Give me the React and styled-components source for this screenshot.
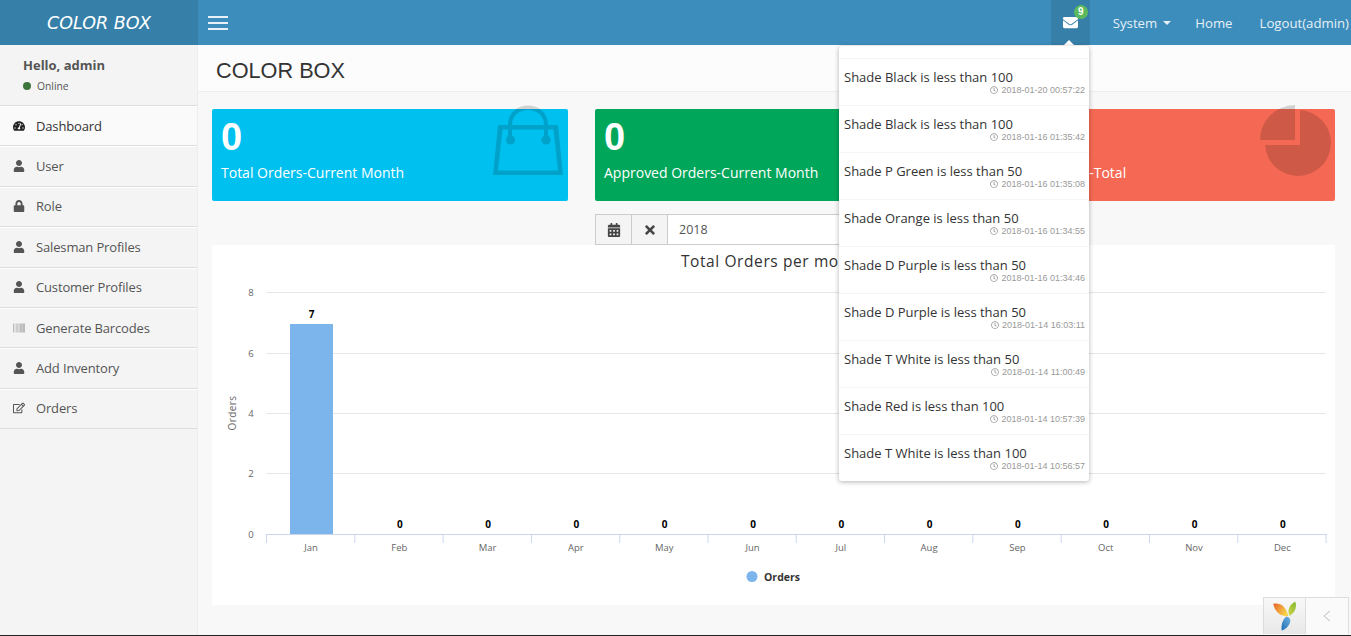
import React from "react";
import styled, { createGlobalStyle } from "styled-components";
import { FaTachometerAlt, FaUser, FaLock, FaBarcode, FaRegEdit, FaCalendarAlt, FaTimes, FaEnvelope, FaRegClock } from "react-icons/fa";

const GlobalStyle = createGlobalStyle`
  html, body { margin: 0; padding: 0; height: 100%; }
  body { font-family: "Open Sans", sans-serif; background: #f8f8f8; }
  * { box-sizing: border-box; }
`;

const menu = [
  { label: "Dashboard", icon: <FaTachometerAlt />, active: true },
  { label: "User", icon: <FaUser /> },
  { label: "Role", icon: <FaLock /> },
  { label: "Salesman Profiles", icon: <FaUser /> },
  { label: "Customer Profiles", icon: <FaUser /> },
  { label: "Generate Barcodes", icon: <FaBarcode />, muted: true },
  { label: "Add Inventory", icon: <FaUser /> },
  { label: "Orders", icon: <FaRegEdit /> },
];

const alerts = [
  ["Shade Black is less than 100", "2018-01-20 00:57:22"],
  ["Shade Black is less than 100", "2018-01-16 01:35:42"],
  ["Shade P Green is less than 50", "2018-01-16 01:35:08"],
  ["Shade Orange is less than 50", "2018-01-16 01:34:55"],
  ["Shade D Purple is less than 50", "2018-01-16 01:34:46"],
  ["Shade D Purple is less than 50", "2018-01-14 16:03:11"],
  ["Shade T White is less than 50", "2018-01-14 11:00:49"],
  ["Shade Red is less than 100", "2018-01-14 10:57:39"],
  ["Shade T White is less than 100", "2018-01-14 10:56:57"],
];

const months = ["Jan", "Feb", "Mar", "Apr", "May", "Jun", "Jul", "Aug", "Sep", "Oct", "Nov", "Dec"];
const orders = [7, 0, 0, 0, 0, 0, 0, 0, 0, 0, 0, 0];

const BagIcon = () => (
  <WatermarkSvg viewBox="0 0 70 72" width="70" height="72">
    <path
      fillRule="evenodd"
      d="M5 20 H65 L70 70 H0 Z M9.5 24.5 L5 65.5 H65 L60.5 24.5 Z"
    />
    <path d="M15 20 C15 -6 55 -6 55 20 V32 H51 V20 C51 0 19 0 19 20 V32 H15 Z" />
    <circle cx="17.5" cy="35" r="4.6" />
    <circle cx="53" cy="35" r="4.6" />
  </WatermarkSvg>
);

const PieIcon = () => (
  <WatermarkSvg viewBox="0 0 72 72" width="72" height="72">
    <path d="M35 0 V35 H0 A35 35 0 0 1 35 0 Z" />
    <path d="M40 5 A33 33 0 1 1 5 40 H40 Z" />
  </WatermarkSvg>
);

const YiiLogo = () => (
  <svg width="25" height="30" viewBox="0 0 26 32">
    <defs>
      <linearGradient id="yiiOrange" x1="0" y1="0" x2="1" y2="0.6">
        <stop offset="0" stopColor="#e8612a" />
        <stop offset="1" stopColor="#f7d64a" />
      </linearGradient>
      <linearGradient id="yiiGreen" x1="0" y1="1" x2="1" y2="0">
        <stop offset="0" stopColor="#d6d84a" />
        <stop offset="1" stopColor="#7cb52f" />
      </linearGradient>
      <linearGradient id="yiiBlue" x1="1" y1="0" x2="0" y2="1">
        <stop offset="0" stopColor="#6fb1e0" />
        <stop offset="1" stopColor="#1f6fb5" />
      </linearGradient>
    </defs>
    <path d="M1 3 C8 1 15 6 17 16 C10 17 3 13 1 3 Z" fill="url(#yiiOrange)" />
    <path d="M24.5 0.5 C26.5 7 24 12.5 18.5 16 C15.5 10 18 4 24.5 0.5 Z" fill="url(#yiiGreen)" />
    <path d="M15 16.5 C19 17.5 20 20 18.5 24 C17 28 12.5 31 10 31.5 C9 26 11 20 15 16.5 Z" fill="url(#yiiBlue)" />
  </svg>
);

const Chart = () => {
  const left = 266;
  const step = 88.3;
  const base = 534;
  const unit = 30;
  const ox = 212;
  const oy = 245;
  return (
    <svg width="1123" height="360" viewBox={`${ox} ${oy} 1123 360`}>
      <rect x={ox} y={oy} width="1123" height="360" fill="#fff" />
      <ChartTitle x="773" y="267">Total Orders per month</ChartTitle>
      {[0, 2, 4, 6, 8].map((v) => {
        const y = [534, 473, 413, 353, 292][v / 2];
        return (
          <g key={v}>
            {v > 0 && <line x1={left} x2="1326" y1={y + 0.5} y2={y + 0.5} stroke="#e6e6e6" />}
            <AxisText x="251" y={y + 3.5} textAnchor="middle">{v}</AxisText>
          </g>
        );
      })}
      <AxisTitle transform="translate(236 413) rotate(-90)" textAnchor="middle">Orders</AxisTitle>
      <line x1={left} x2="1327" y1={base + 0.5} y2={base + 0.5} stroke="#ccd6eb" />
      {[...months, ""].map((m, i) => (
        <line key={i} x1={left + step * i + 0.5} x2={left + step * i + 0.5} y1={base} y2={base + 9} stroke="#ccd6eb" />
      ))}
      {months.map((m, i) => {
        const cx = left + step * i + 44.5;
        const h = orders[i] * unit;
        return (
          <g key={m}>
            {h > 0 && <rect x={cx - 20.5} y={base - h} width="43" height={h} fill="#7cb5ec" />}
            <ValueText x={cx + 1} y={base - h - 6}>{orders[i]}</ValueText>
            <AxisText x={cx + 0.5} y={base + 17} textAnchor="middle">{m}</AxisText>
          </g>
        );
      })}
      <circle cx="752" cy="576.5" r="5.5" fill="#7cb5ec" />
      <LegendText x="764" y="581">Orders</LegendText>
    </svg>
  );
};

const App = () => {
  return (
    <Page>
      <GlobalStyle />
      <Header>
        <Logo>COLOR BOX</Logo>
        <TopBar>
          <Burger>
            <span />
            <span />
            <span />
          </Burger>
          <TopNav>
            <MailTab>
              <FaEnvelope />
              <Badge>9</Badge>
              <Caret />
            </MailTab>
            <TopLink $gap={24}>System <SmallCaret /></TopLink>
            <TopLink $gap={27}>Home</TopLink>
            <TopLink $gap={0}>Logout(admin)</TopLink>
          </TopNav>
        </TopBar>
        <Dropdown>
          <EmptyRow />
          {alerts.map(([text, time], i) => (
            <AlertRow key={i}>
              <AlertText>{text}</AlertText>
              <AlertTime><FaRegClock /> {time}</AlertTime>
            </AlertRow>
          ))}
        </Dropdown>
      </Header>
      <Body>
        <Sidebar>
          <UserPanel>
            <UserName>Hello, admin</UserName>
            <UserStatus><Dot />Online</UserStatus>
          </UserPanel>
          <Menu>
            {menu.map((item) => (
              <MenuItem key={item.label} $active={item.active}>
                <MenuIcon $active={item.active} $muted={item.muted}>{item.icon}</MenuIcon>
                {item.label}
              </MenuItem>
            ))}
          </Menu>
        </Sidebar>
        <Main>
          <PageHead>COLOR BOX</PageHead>
          <Content>
            <Cards>
              <Card $bg="#00c0ef">
                <CardNumber>0</CardNumber>
                <CardLabel>Total Orders-Current Month</CardLabel>
                <BagSlot><BagIcon /></BagSlot>
              </Card>
              <Card $bg="#00a65a">
                <CardNumber>0</CardNumber>
                <CardLabel>Approved Orders-Current Month</CardLabel>
              </Card>
              <Card $bg="#f56954">
                <CardNumber>0</CardNumber>
                <CardLabel>Pending Orders-Total</CardLabel>
                <PieSlot><PieIcon /></PieSlot>
              </Card>
            </Cards>
            <FilterRow>
              <InputGroup>
                <Addon><FaCalendarAlt /></Addon>
                <Addon><FaTimes /></Addon>
                <YearInput>2018</YearInput>
              </InputGroup>
            </FilterRow>
            <ChartBox><Chart /></ChartBox>
          </Content>
        </Main>
      </Body>
      <DebugBar>
        <DebugLogo><YiiLogo /></DebugLogo>
        <DebugToggle>
          <svg width="10" height="14" viewBox="0 0 10 14" fill="none" stroke="#bbb" strokeWidth="1">
            <path d="M8 2 L2 7 L8 12" />
          </svg>
        </DebugToggle>
      </DebugBar>
    </Page>
  );
};

export default App;

const Page = styled.div`
  position: relative;
  width: 1351px;
  height: 636px;
  overflow: hidden;
  background: #f8f8f8;
  border-bottom: 1px solid #222;
`;

const Header = styled.header`
  position: relative;
  display: flex;
  height: 45px;
  z-index: 5;
`;

const Logo = styled.div`
  width: 198px;
  background: #367fa9;
  color: #fff;
  font-family: "DejaVu Sans", sans-serif;
  font-style: oblique;
  font-size: 17.5px;
  text-align: center;
  line-height: 47px;
`;

const TopBar = styled.div`
  flex: 1;
  display: flex;
  justify-content: space-between;
  background: #3c8dbc;
`;

const Burger = styled.div`
  width: 40px;
  padding: 16px 0 0 10px;
  span {
    display: block;
    width: 20px;
    height: 1.5px;
    margin-bottom: 4.5px;
    background: #e8f1f7;
  }
`;

const TopNav = styled.nav`
  display: flex;
  align-items: center;
  height: 100%;
  padding-right: 2px;
  color: #fff;
`;

const MailTab = styled.div`
  position: relative;
  display: flex;
  align-items: center;
  justify-content: center;
  width: 39px;
  height: 100%;
  margin-right: 23px;
  background: #367fa9;
  color: #fff;
  font-size: 15px;
`;

const Badge = styled.span`
  position: absolute;
  top: 5px;
  right: 2px;
  width: 14px;
  height: 14px;
  border-radius: 50%;
  background: #5cb85c;
  color: #fff;
  font-family: "Liberation Sans", sans-serif;
  font-size: 10px;
  font-weight: 700;
  line-height: 14px;
  text-align: center;
`;

const Caret = styled.span`
  position: absolute;
  bottom: -1px;
  left: 12.5px;
  border: 6px solid transparent;
  border-top: 0;
  border-bottom-color: #fff;
`;

const TopLink = styled.a`
  display: flex;
  align-items: center;
  gap: 6px;
  margin-right: ${({ $gap }) => $gap}px;
  color: #e6f0f6;
  font-size: 13.2px;
  white-space: nowrap;
`;

const SmallCaret = styled.span`
  border: 4px solid transparent;
  border-bottom: 0;
  border-top-color: #e6f0f6;
`;

const Dropdown = styled.div`
  position: absolute;
  top: 46px;
  left: 839px;
  width: 250px;
  background: #fff;
  border-radius: 3px;
  box-shadow: 0 1px 5px rgba(0, 0, 0, 0.3);
`;

const EmptyRow = styled.div`
  height: 13px;
  border-bottom: 1px solid #f4f4f4;
`;

const AlertRow = styled.div`
  height: 47px;
  padding: 9px 4px 0 5px;
  border-bottom: 1px solid #f4f4f4;
  &:last-child {
    height: 46px;
    border-bottom: 0;
  }
`;

const AlertText = styled.div`
  color: #333;
  font-size: 13px;
  line-height: 18px;
`;

const AlertTime = styled.div`
  display: flex;
  align-items: center;
  justify-content: flex-end;
  gap: 3px;
  margin-top: -2px;
  color: #999;
  font-family: "Liberation Sans", sans-serif;
  font-size: 9px;
  line-height: 12px;
  svg {
    font-size: 8px;
  }
`;

const Body = styled.div`
  display: flex;
  height: 590px;
`;

const Sidebar = styled.aside`
  width: 198px;
  background: #f4f4f4;
  border-right: 1px solid #eee;
`;

const UserPanel = styled.div`
  height: 60px;
  padding: 11px 0 0 23px;
`;

const UserName = styled.div`
  color: #555;
  font-size: 13px;
  font-weight: 700;
  line-height: 18px;
`;

const UserStatus = styled.div`
  display: flex;
  align-items: center;
  gap: 6px;
  margin-top: 5px;
  color: #555;
  font-size: 10.3px;
  line-height: 14px;
`;

const Dot = styled.span`
  width: 8px;
  height: 8px;
  border-radius: 50%;
  background: #3c763d;
`;

const Menu = styled.ul`
  margin: 0;
  padding: 0;
  list-style: none;
  border-top: 1px solid #ddd;
`;

const MenuItem = styled.li`
  display: flex;
  align-items: center;
  height: 40.4px;
  padding: 0 0 1px 13px;
  background: ${({ $active }) => ($active ? "#fafafa" : "transparent")};
  color: ${({ $active }) => ($active ? "#333" : "#555")};
  border-top: 1px solid #fff;
  border-bottom: 1px solid #ddd;
  font-size: 13px;
  letter-spacing: -0.15px;
`;

const MenuIcon = styled.span`
  display: flex;
  justify-content: flex-start;
  width: 23px;
  font-size: 12px;
  color: ${({ $active, $muted }) => ($muted ? "#999" : $active ? "#222" : "#555")};
`;

const Main = styled.main`
  flex: 1;
  min-width: 0;
`;

const PageHead = styled.h1`
  height: 47px;
  margin: 0;
  padding-left: 18px;
  background: #fcfcfc;
  border-bottom: 1px solid #eee;
  color: #333;
  font-family: "Liberation Sans", sans-serif;
  font-size: 21.7px;
  font-weight: 400;
  line-height: 51px;
`;

const Content = styled.div`
  padding: 17px 16px 0 14px;
`;

const Cards = styled.div`
  display: grid;
  grid-template-columns: 356px 356px 357px;
  gap: 27px;
`;

const Card = styled.div`
  position: relative;
  height: 92px;
  padding: 9px 9px 0;
  background: ${({ $bg }) => $bg};
  border-radius: 2px;
  color: #fff;
`;

const CardNumber = styled.div`
  font-family: "Liberation Sans", sans-serif;
  font-size: 38px;
  font-weight: 700;
  line-height: 38px;
`;

const CardLabel = styled.div`
  margin-top: 7px;
  font-size: 14px;
  line-height: 20px;
  white-space: nowrap;
`;

const BagSlot = styled.div`
  position: absolute;
  top: -4px;
  right: 5px;
`;

const PieSlot = styled.div`
  position: absolute;
  top: -4px;
  right: 3px;
`;

const WatermarkSvg = styled.svg`
  display: block;
  overflow: visible;
  fill: #000;
  opacity: 0.15;
`;

const FilterRow = styled.div`
  display: flex;
  height: 31px;
  margin-top: 13px;
  padding-left: 383px;
`;

const InputGroup = styled.div`
  display: flex;
  width: 356px;
  height: 31px;
`;

const Addon = styled.div`
  display: flex;
  align-items: center;
  justify-content: center;
  width: 37px;
  margin-right: -1px;
  background: #f4f4f4;
  border: 1px solid #ccc;
  color: #444;
  font-size: 14px;
`;

const YearInput = styled.div`
  flex: 1;
  padding-left: 11px;
  background: #fff;
  border: 1px solid #ccc;
  color: #555;
  font-size: 12.5px;
  line-height: 29px;
`;

const ChartBox = styled.div`
  width: 1123px;
  height: 360px;
  svg {
    display: block;
  }
`;

const ChartTitle = styled.text`
  fill: #333;
  font-family: "Open Sans", sans-serif;
  font-size: 15.5px;
  letter-spacing: 0.6px;
  text-anchor: middle;
`;

const AxisText = styled.text`
  fill: #666;
  font-family: "Open Sans", sans-serif;
  font-size: 9.5px;
`;

const AxisTitle = styled.text`
  fill: #666;
  font-family: "Open Sans", sans-serif;
  font-size: 10px;
  letter-spacing: 0.4px;
`;

const ValueText = styled.text`
  fill: #000;
  font-family: "Open Sans", sans-serif;
  font-size: 10px;
  font-weight: 700;
  stroke: #fff;
  stroke-width: 2px;
  paint-order: stroke;
  text-anchor: middle;
`;

const LegendText = styled.text`
  fill: #333;
  font-family: "Open Sans", sans-serif;
  font-size: 10.5px;
  font-weight: 700;
`;

const DebugBar = styled.div`
  position: absolute;
  right: 2px;
  bottom: 1px;
  display: flex;
  width: 86px;
  height: 37px;
  border: 1px solid #ddd;
  border-bottom: 0;
  background: #fafafa;
  z-index: 6;
`;

const DebugLogo = styled.div`
  display: flex;
  align-items: center;
  justify-content: center;
  width: 42px;
  background: linear-gradient(#f8f8f8, #e8e8e8);
  border-right: 1px solid #ddd;
`;

const DebugToggle = styled.div`
  flex: 1;
  display: flex;
  align-items: center;
  justify-content: center;
`;
